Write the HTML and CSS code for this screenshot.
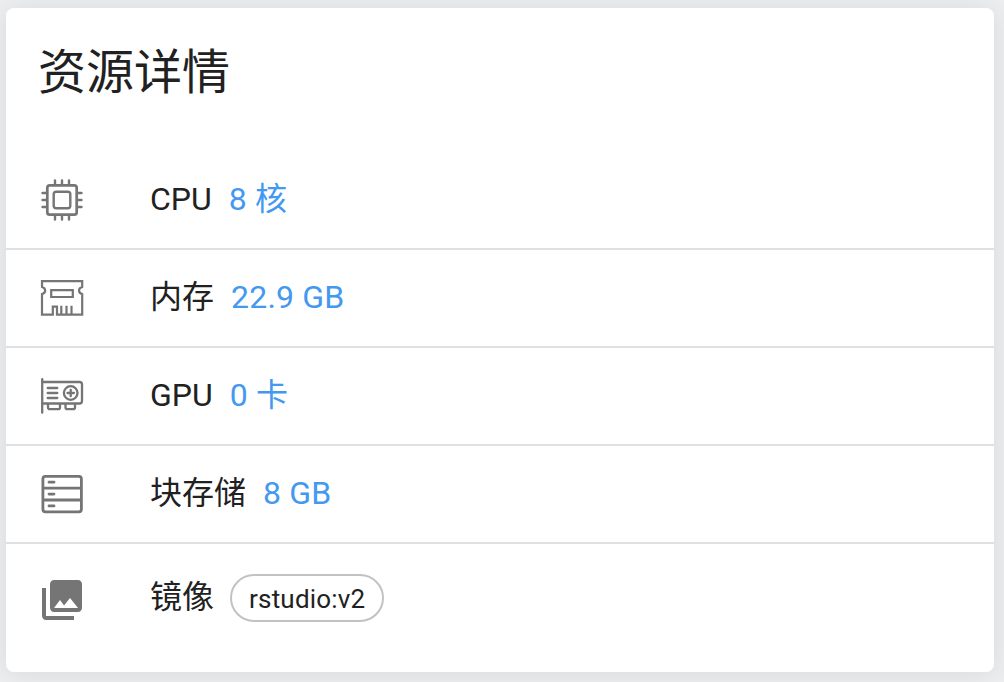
FILE: index.html
```html
<!DOCTYPE html>
<html lang="zh-CN">
<head>
<meta charset="utf-8">
<title>资源详情</title>
<link rel="stylesheet" href="styles.css">
</head>
<body>
<main class="card">
  <h1 class="title">资源详情</h1>
  <ul class="list">
    <li class="row">
      <svg class="icon" viewBox="0 0 48 48" fill="none" stroke="currentColor">
        <rect x="9.300" y="9.300" width="29.400" height="29.400" rx="2.500" stroke-width="2.700"/>
        <rect x="15.700" y="15.700" width="16.600" height="16.600" rx="2.500" stroke-width="2.400"/>
        <path stroke-width="2.400" stroke-linecap="round" d="M17 4.500v4M24 4.500v4M31 4.500v4M17 39.500v4M24 39.500v4M31 39.500v4M4.500 17h4M4.500 24h4M4.500 31h4M39.500 17h4M39.500 24h4M39.500 31h4"/>
      </svg>
      <span class="label text">CPU</span><span class="value text">8 核</span>
    </li>
    <li class="row">
      <svg class="icon" viewBox="0 0 48 48" fill="none" stroke="currentColor" stroke-width="2.200">
        <path d="M4 7.200h40.200v5.800c-4.200 1-4.200 6 0 7V40.700H19V32.700h-4.200v8H4V20c4.200-1 4.200-6 0-7z"/>
        <path d="M23.300 31.700v9M28.500 31.700v9M33.500 31.700v9"/>
        <path d="M13.200 16.200h21.600v6.800H13.200z"/>
      </svg>
      <span class="label text">内存</span><span class="value text">22.9 GB</span>
    </li>
    <li class="row">
      <svg class="icon" viewBox="0 0 48 48" fill="none" stroke="currentColor" stroke-width="2.300">
        <path stroke-linecap="round" d="M4.200 7.200v33.500"/>
        <path d="M4 10h37.500q2.500 0 2.500 2.500v16.500q0 2.500-2.500 2.500H4M10 32v3.200q0 2 2 2h8q2 0 2-2V32M27.500 32v3.200q0 2 2 2h5.500q2 0 2-2V32"/>
        <path stroke-linecap="round" d="M9.700 16h9.600M9.700 21h9.600M9.700 26h9.600M29.500 21h6.400M32.700 17.800v6.400"/>
        <circle cx="32.700" cy="21" r="6.800"/>
      </svg>
      <span class="label text">GPU</span><span class="value text">0 卡</span>
    </li>
    <li class="row">
      <svg class="icon" viewBox="0 0 48 48" fill="none" stroke="currentColor" stroke-width="2.800">
        <rect x="4.900" y="6.400" width="38.500" height="35.400" rx="2.500"/>
        <path d="M4.900 18.200h38.500M4.900 30h38.500"/>
        <path stroke-linecap="round" d="M11 12.200h5M11 24.100h5M11 35.900h5"/>
      </svg>
      <span class="label text">块存储</span><span class="value text">8 GB</span>
    </li>
    <li class="row row-image">
      <svg class="icon" viewBox="0 0 48 48" fill="currentColor">
        <path transform="translate(2 3)" d="M42 31V7c0-2.200-1.800-4-4-4H14c-2.200 0-4 1.800-4 4v24c0 2.200 1.800 4 4 4h24c2.200 0 4-1.800 4-4zM20 23l4.060 5.420L30 21l8 10H14zM2 11v28c0 2.200 1.800 4 4 4h28v-4H6V11z"/>
      </svg>
      <span class="label text">镜像</span><span class="chip">rstudio:v2</span>
    </li>
  </ul>
</main>
</body>
</html>
```
FILE: styles.css
```css
* {
  box-sizing: border-box;
}

body {
  margin: 0;
  padding: 8px 10px 10px 6px;
  height: 682px;
  overflow: hidden;
  background: #edeeef;
  color: #212121;
  font-family: Roboto, "Noto Sans CJK SC", sans-serif;
}

.card {
  height: 664px;
  border-radius: 8px;
  background: #fff;
  box-shadow: 0 2px 28px rgba(0, 0, 0, 0.09);
}

.title {
  margin: 0;
  height: 144px;
  padding: 33px 32px 0;
  font-size: 48px;
  font-weight: 400;
  line-height: 64px;
}

.list {
  list-style: none;
  margin: 0;
  padding: 0;
}

.row {
  display: flex;
  align-items: center;
  height: 98px;
  padding: 0 32px;
  border-bottom: 2px solid #e0e0e0;
  font-size: 32px;
  line-height: 48px;
}

.row-image {
  height: 108px;
  border-bottom: 0;
}

.icon {
  flex: none;
  width: 48px;
  height: 48px;
  margin-right: 64px;
  color: #757575;
}

.text {
  padding-bottom: 2px;
}

.label {
  margin-right: 17px;
}

.value {
  color: #4398f0;
  letter-spacing: 0.2px;
}

.chip {
  height: 48px;
  margin-left: -1px;
  padding: 0 17px;
  border: 2px solid #c2c2c2;
  border-radius: 24px;
  font-size: 26px;
  line-height: 46px;
  letter-spacing: 0.2px;
}
```
